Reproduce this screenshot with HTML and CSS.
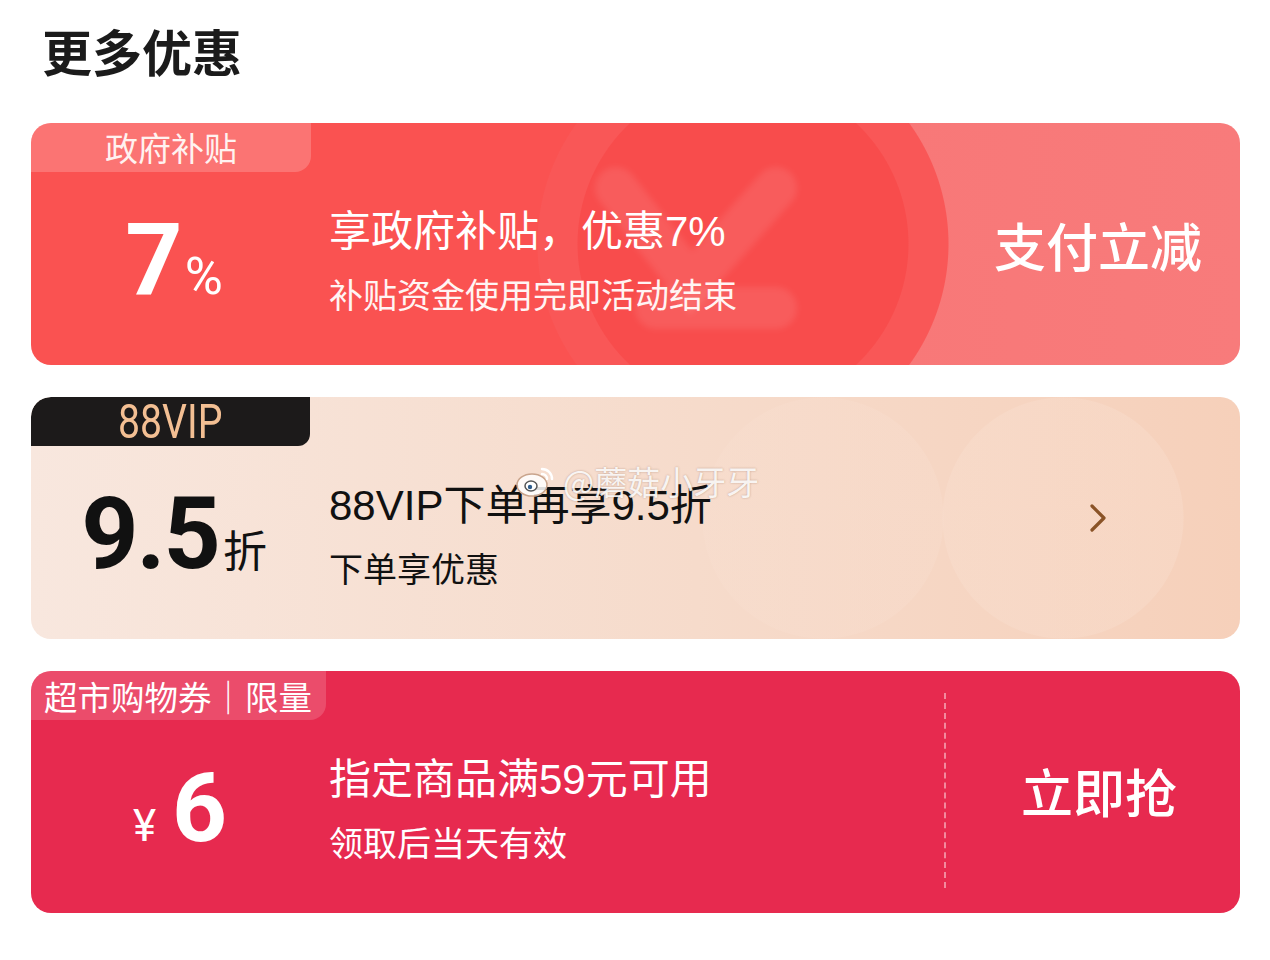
FILE: index.html
```html
<!DOCTYPE html>
<html>
<head>
<meta charset="utf-8"/>
<title>更多优惠</title>
<link rel="stylesheet" href="styles.css">
</head>
<body>
<h1 class="page-title">更多优惠</h1>

<div class="card card-gov">
   <svg class="yuan-mark" width="300" height="240" viewBox="0 0 300 240">
      <g fill="none" stroke="#ffffff" stroke-opacity="0.09" stroke-width="42" stroke-linecap="round">
         <path d="M50 30 L125 125 L210 30"/>
         <path d="M90 150 L210 150"/>
      </g>
   </svg>
   <div class="card-main">
      <div class="tag tag-gov">政府补贴</div>
      <div class="card-body">
         <div class="value"><span class="num">7</span><span class="unit">%</span></div>
         <div class="info">
            <div class="info-title">享政府补贴，优惠7%</div>
            <div class="info-sub">补贴资金使用完即活动结束</div>
         </div>
      </div>
   </div>
   <div class="card-action">支付立减</div>
</div>

<div class="card card-vip">
   <div class="card-main">
      <div class="tag tag-vip"><span class="vip-text">88VIP</span></div>
      <div class="card-body">
         <div class="value"><span class="num">9.5</span><span class="unit unit-zhe">折</span></div>
         <div class="info">
            <div class="info-title">88VIP下单再享9.5折</div>
            <div class="info-sub">下单享优惠</div>
         </div>
      </div>
   </div>
   <div class="card-action">
      <svg width="22" height="32" viewBox="0 0 22 32"><path d="M5 4 L17 16 L5 28" fill="none" stroke="#8a5327" stroke-width="3.2" stroke-linecap="round" stroke-linejoin="round"/></svg>
   </div>
   <div class="watermark">
      <svg width="44" height="36" viewBox="0 0 44 36">
         <ellipse cx="17" cy="22" rx="15" ry="11" fill="#ffffff" fill-opacity="0.85" stroke="#c9a48c" stroke-width="1.5"/>
         <ellipse cx="16" cy="23" rx="6" ry="5" fill="#ffffff" stroke="#555" stroke-width="1.5"/>
         <circle cx="15" cy="24" r="2.2" fill="#2d5b8a"/>
         <path d="M27 6 A10 10 0 0 1 37 16" fill="none" stroke="#ffffff" stroke-width="2.5" stroke-linecap="round"/>
         <path d="M27 11 A5 5 0 0 1 32 16" fill="none" stroke="#ffffff" stroke-width="2.5" stroke-linecap="round"/>
      </svg>
      <span>@蘑菇小牙牙</span>
   </div>
</div>

<div class="card card-market">
   <div class="card-main">
      <div class="tag tag-market">超市购物券｜限量</div>
      <div class="card-body">
         <div class="value value-market"><span class="unit unit-yen">¥</span><span class="num">6</span></div>
         <div class="info">
            <div class="info-title">指定商品满59元可用</div>
            <div class="info-sub">领取后当天有效</div>
         </div>
      </div>
   </div>
   <div class="card-action action-dashed">立即抢</div>
</div>
</body>
</html>
```

FILE: styles.css
```css
body {
   margin: 0;
   background-color: #ffffff;
   font-family: "Noto Sans CJK SC", "Noto Sans", sans-serif;
   color: #1b1b1b;
}

.page-title {
   margin: 0;
   padding: 20px 0 0 42px;
   height: 123px;
   box-sizing: border-box;
   font-size: 50px;
   line-height: 60px;
   font-weight: 700;
}

.card {
   position: relative;
   display: flex;
   width: 1209px;
   height: 242px;
   margin: 0 0 32px 31px;
   border-radius: 20px;
   overflow: hidden;
}

.card-main {
   flex: 1;
   display: flex;
   flex-direction: column;
   position: relative;
}

.tag {
   align-self: flex-start;
   height: 49px;
   line-height: 49px;
   padding: 0 13px;
   font-size: 33px;
   border-bottom-right-radius: 16px;
   text-align: center;
   box-sizing: border-box;
}

.card-body {
   flex: 1;
   display: flex;
   align-items: center;
   padding-bottom: 17px;
}

.value {
   width: 286px;
   margin-right: 12px;
   display: flex;
   justify-content: center;
   align-items: baseline;
}

.num {
   font-family: Roboto, "Liberation Sans", sans-serif;
   font-weight: 700;
   font-size: 100px;
   line-height: 1;
   letter-spacing: -2px;
}

.unit {
   font-family: Roboto, "Liberation Sans", sans-serif;
   font-size: 52px;
   margin-left: 4px;
}

.info-title {
   font-family: "Liberation Sans", "Noto Sans CJK SC", sans-serif;
   font-size: 42px;
   line-height: 55px;
}

.info-sub {
   font-size: 34px;
   line-height: 44px;
   margin-top: 13px;
}

.card-action {
   width: 296px;
   padding-left: 12px;
   box-sizing: border-box;
   display: flex;
   align-items: center;
   justify-content: center;
   font-size: 52px;
   font-weight: 500;
   position: relative;
}

/* 政府补贴 */
.card-gov {
   color: #ffffff;
   background:
      radial-gradient(circle at 712px 121px, #f84c4c 0, #f84c4c 165px, #f95757 166px, #f95757 205px, rgba(248, 120, 120, 0) 206px),
      linear-gradient(90deg, #fa5251 0, #fa5251 62%, #f87878 72%, #f87b7b 100%);
}

.yuan-mark {
   position: absolute;
   left: 535px;
   top: 35px;
   filter: blur(3px);
}

.tag-gov {
   width: 280px;
   background-color: rgba(255, 255, 255, 0.2);
   color: #fff2f0;
}

.card-gov .info-sub {
   color: #fff4f3;
}

/* 88VIP */
.card-vip {
   color: #111111;
   background:
      radial-gradient(circle at 1032px 121px, rgba(250, 226, 212, 0.3) 0, rgba(250, 226, 212, 0.3) 120px, rgba(250, 226, 212, 0) 121px),
      radial-gradient(circle at 792px 121px, rgba(249, 224, 210, 0.28) 0, rgba(249, 224, 210, 0.28) 120px, rgba(249, 224, 210, 0) 121px),
      linear-gradient(90deg, #f8e7de 0, #f6dbcb 55%, #f6d0ba 100%);
}

.tag-vip {
   width: 279px;
   background-color: #1c1a1a;
   color: #f3bf93;
   border-top-left-radius: 20px;
   border-bottom-right-radius: 12px;
}

.vip-text {
   display: inline-block;
   font-family: Roboto, "Liberation Sans", sans-serif;
   font-size: 49px;
   line-height: 49px;
   transform: scaleX(0.8);
}

.card-vip .num {
   font-size: 100px;
}

.unit-zhe {
   font-family: "Noto Sans CJK SC", sans-serif;
   font-size: 44px;
   margin-left: 4px;
}

.watermark {
   position: absolute;
   left: 484px;
   top: 60px;
   display: flex;
   align-items: center;
   gap: 4px;
   color: rgba(255, 255, 255, 0.88);
   font-size: 33px;
   text-shadow: 0 0 2px rgba(120, 80, 60, 0.45);
}

/* 超市购物券 */
.card-market {
   color: #ffffff;
   background-color: #e72a4f;
}

.tag-market {
   background-color: rgba(255, 255, 255, 0.16);
   padding: 0 14px 0 13px;
   font-size: 33.5px;
}

.value-market {
   padding-left: 10px;
   box-sizing: border-box;
}

.card-market .num {
   font-size: 96px;
}

.unit-yen {
   font-size: 44px;
   margin: 0 16px 0 0;
}

.action-dashed {
   margin: 22px 0 25px;
   border-left: 2px dashed rgba(255, 255, 255, 0.45);
}
```
